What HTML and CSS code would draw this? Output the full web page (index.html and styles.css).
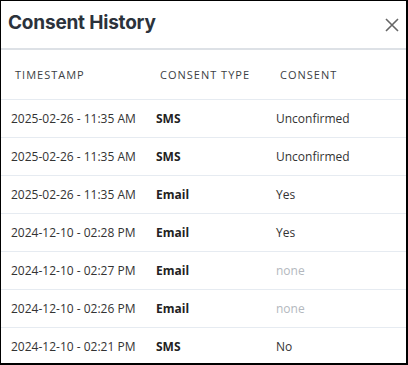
FILE: index.html
```html
<!DOCTYPE html>
<html lang="en">
<head>
    <meta charset="UTF-8">
    <title>Consent History</title>
    <link rel="stylesheet" href="styles.css">
</head>
<body>
    <div class="modal">
        <div class="modal-header">
            <h1>Consent History</h1>
            <button class="close-btn" type="button" aria-label="Close">
                <svg width="14" height="14" viewBox="0 0 14 14">
                    <path d="M1 1 L13 13 M13 1 L1 13" stroke="#666" stroke-width="1.6" fill="none"/>
                </svg>
            </button>
        </div>
        <table class="history">
            <colgroup>
                <col class="col-time">
                <col class="col-type">
                <col>
            </colgroup>
            <thead>
                <tr>
                    <th>Timestamp</th>
                    <th>Consent Type</th>
                    <th>Consent</th>
                </tr>
            </thead>
            <tbody>
                <tr><td>2025-02-26 - 11:35 AM</td><td class="type">SMS</td><td>Unconfirmed</td></tr>
                <tr><td>2025-02-26 - 11:35 AM</td><td class="type">SMS</td><td>Unconfirmed</td></tr>
                <tr><td>2025-02-26 - 11:35 AM</td><td class="type">Email</td><td>Yes</td></tr>
                <tr><td>2024-12-10 - 02:28 PM</td><td class="type">Email</td><td>Yes</td></tr>
                <tr><td>2024-12-10 - 02:27 PM</td><td class="type">Email</td><td class="none">none</td></tr>
                <tr><td>2024-12-10 - 02:26 PM</td><td class="type">Email</td><td class="none">none</td></tr>
                <tr><td>2024-12-10 - 02:21 PM</td><td class="type">SMS</td><td>No</td></tr>
            </tbody>
        </table>
    </div>
</body>
</html>
```

FILE: styles.css
```css
body {
    margin: 0;
    font-family: 'Open Sans', 'Liberation Sans', sans-serif;
    background: #ffffff;
}

.modal {
    box-sizing: border-box;
    width: 408px;
    height: 365px;
    overflow: hidden;
    border-top: 1px solid #000;
    border-left: 1px solid #000;
    border-right: 2px solid #000;
    border-bottom: 2px solid #000;
    background: #fff;
}

.modal-header {
    display: flex;
    align-items: center;
    justify-content: space-between;
    height: 47px;
    padding: 0 7px 0 7px;
    border-bottom: 2px solid #dde1e6;
}

.modal-header h1 {
    margin: 0;
    margin-top: -5px;
    font-family: 'Inter', 'Noto Sans', sans-serif;
    font-size: 19px;
    font-weight: 700;
    letter-spacing: -0.2px;
    color: #2b323b;
}

.close-btn {
    border: none;
    background: none;
    padding: 0;
    margin-top: 1px;
    width: 14px;
    height: 14px;
    cursor: pointer;
}

.close-btn svg {
    display: block;
}

.history {
    width: 100%;
    border-collapse: collapse;
    table-layout: fixed;
}

.col-time {
    width: 145px;
}

.col-type {
    width: 120px;
}

.history th {
    height: 49px;
    padding: 0 0 0 14px;
    text-align: left;
    font-size: 11px;
    font-weight: 400;
    letter-spacing: 1px;
    text-transform: uppercase;
    color: #3c3f44;
    border-bottom: 1px solid #e6ebf1;
}

.history td {
    height: 37px;
    padding: 0 0 0 10px;
    font-size: 12px;
    color: #333;
    border-bottom: 1px solid #e6ebf1;
    white-space: nowrap;
}

.history td.type {
    font-weight: 700;
    color: #222;
}

.history td.none {
    color: #b3b8be;
}
```
